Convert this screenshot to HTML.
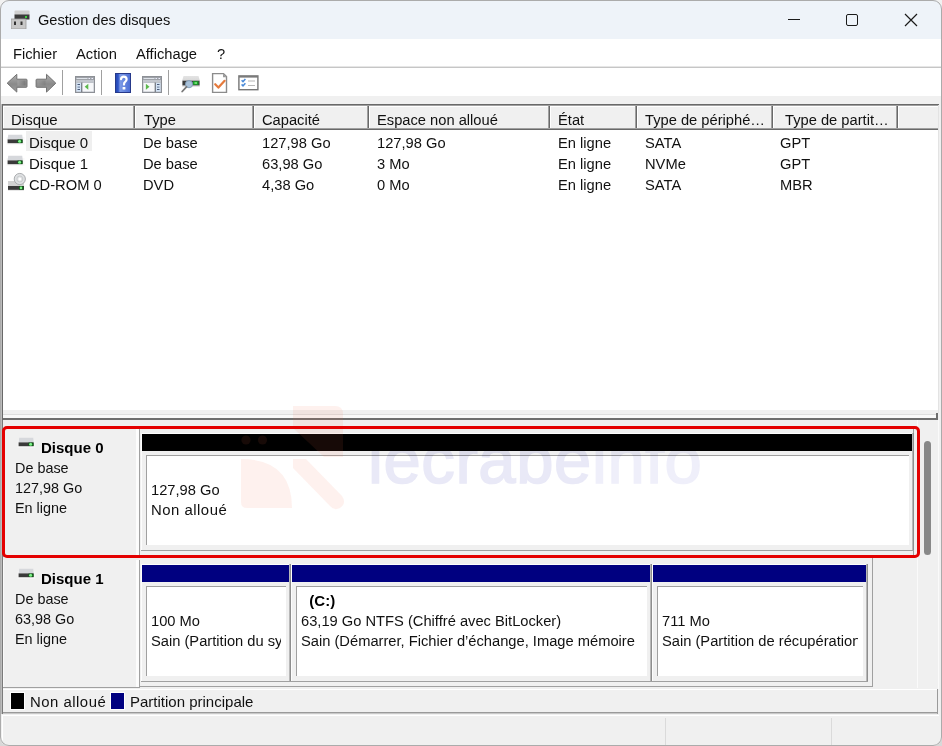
<!DOCTYPE html>
<html><head><meta charset="utf-8">
<style>
*{margin:0;padding:0;box-sizing:border-box}
html,body{width:942px;height:746px;overflow:hidden;background:linear-gradient(#f2f2f2,#d8d8d8)}
body{position:relative;font-family:"Liberation Sans",sans-serif;font-size:14.5px;color:#000}
.a{position:absolute}
.t{position:absolute;line-height:20px;white-space:nowrap;font-size:14.7px;color:#111}
.b{font-weight:bold;color:#000;font-size:15px}
.d{font-size:15px}
#win{position:absolute;left:0;top:0;width:942px;height:746px;border-radius:9px;overflow:hidden;background:#f0f0f0}
#frame{position:absolute;left:0;top:0;width:942px;height:746px;border:1px solid #ababab;border-radius:9px;pointer-events:none}
</style></head><body>
<div id="win">
<div class="a" style="left:0px;top:0px;width:942px;height:39px;background:#eef3f9;"></div>
<div class="a" style="left:0px;top:39px;width:942px;height:27px;background:#fff;"></div>
<div class="a" style="left:0px;top:66px;width:942px;height:1px;background:#e6e6e6;"></div>
<div class="a" style="left:0px;top:67px;width:942px;height:1px;background:#c6c6c6;"></div>
<div class="a" style="left:0px;top:68px;width:942px;height:28px;background:#fff;"></div>
<div class="a" style="left:0px;top:96px;width:942px;height:8px;background:#f0f0f0;"></div>
<svg class="a" style="left:11px;top:10px" width="20" height="19" viewBox="0 0 20 19">
<rect x="3.5" y="0.5" width="15" height="5" rx="1" fill="#cfcfcf"/>
<rect x="3.5" y="4.5" width="15" height="5" fill="#3b3b3b"/>
<rect x="14" y="6" width="2" height="2" fill="#3ad13a"/>
<rect x="0" y="9" width="15" height="10" fill="#c8c8c8" stroke="#9a9a9a" stroke-width="0.8"/>
<rect x="3" y="11.5" width="2" height="3.5" fill="#333"/>
<rect x="9.5" y="11.5" width="2" height="3.5" fill="#333"/>
</svg>
<div class="t" style="left:38px;top:9.600000000000001px;font-size:14.6px;">Gestion des disques</div>
<div class="a" style="left:788px;top:19px;width:12px;height:1px;background:#1a1a1a;"></div>
<div class="a" style="left:846px;top:14px;width:12px;height:12px;border:1.2px solid #1a1a1a;border-radius:2px"></div>
<svg class="a" style="left:904px;top:13px" width="14" height="14" viewBox="0 0 14 14"><path d="M1 1L13 13M13 1L1 13" stroke="#1a1a1a" stroke-width="1.2"/></svg>
<div class="t" style="left:13px;top:43.6px;">Fichier</div>
<div class="t" style="left:76px;top:43.6px;">Action</div>
<div class="t" style="left:136px;top:43.6px;">Affichage</div>
<div class="t" style="left:217px;top:43.6px;">?</div>
<div class="a" style="left:62px;top:70px;width:1px;height:25px;background:#a0a0a0;"></div>
<div class="a" style="left:101px;top:70px;width:1px;height:25px;background:#a0a0a0;"></div>
<div class="a" style="left:168px;top:70px;width:1px;height:25px;background:#a0a0a0;"></div>
<svg class="a" style="left:0px;top:70px" width="60" height="26" viewBox="0 0 60 26">
<defs>
<linearGradient id="ag" x1="0" y1="0" x2="0" y2="1"><stop offset="0" stop-color="#b0b0b0"/><stop offset="0.55" stop-color="#8a8a8a"/><stop offset="1" stop-color="#9c9c9c"/></linearGradient>
<linearGradient id="ag2" x1="0" y1="0" x2="1" y2="0"><stop offset="0" stop-color="#aaa"/><stop offset="1" stop-color="#6c6c6c"/></linearGradient>
</defs>
<path d="M7.2 13.2L16.8 4.3V9.2H26.2Q27 9.2 27 10V16.5Q27 17.3 26.2 17.3H16.8V22.1Z" fill="url(#ag)" stroke="#727272" stroke-width="1" stroke-linejoin="round"/>
<path d="M17.5 10.5H25.5V15.5H17.5Z" fill="url(#ag2)" opacity="0.6"/>
<path d="M55.8 13.2L46.5 4.3V9.2H36.9Q36.1 9.2 36.1 10V16.5Q36.1 17.3 36.9 17.3H46.5V22.1Z" fill="url(#ag)" stroke="#727272" stroke-width="1" stroke-linejoin="round"/>
<path d="M37.5 10.5H45.5V15.5H37.5Z" fill="url(#ag2)" opacity="0.35"/>
</svg>
<svg class="a" style="left:75px;top:76px" width="20" height="17" viewBox="0 0 20 17"><rect x="0.5" y="0.5" width="19" height="16" fill="#b9bdc4" stroke="#8d9096"/><rect x="1" y="1" width="18" height="3" fill="#9ea2a8"/><rect x="1.5" y="2" width="11" height="1" fill="#dfe3ea"/><rect x="13.5" y="2" width="1.5" height="1" fill="#eef"/><rect x="16.5" y="2" width="1.5" height="1" fill="#eef"/><rect x="1" y="4" width="18" height="2.5" fill="#c3c7ce"/><rect x="1.5" y="7" width="4.5" height="8.5" fill="#d3e3f5"/><rect x="2.5" y="8" width="2.5" height="1" fill="#4a5a78"/><rect x="2.5" y="10.5" width="2.5" height="1.2" fill="#7a8aa8"/><rect x="2.5" y="13" width="2.5" height="1" fill="#4a5a78"/><rect x="6.2" y="6.5" width="1.2" height="9.5" fill="#6e737c"/><rect x="7.5" y="7" width="11" height="8.5" fill="#f6f7f9"/><path d="M9.7 10.8L13.3 7.8V13.8Z" fill="#5cb84c"/></svg>
<svg class="a" style="left:142px;top:76px" width="20" height="17" viewBox="0 0 20 17"><rect x="0.5" y="0.5" width="19" height="16" fill="#b9bdc4" stroke="#8d9096"/><rect x="1" y="1" width="18" height="3" fill="#9ea2a8"/><rect x="1.5" y="2" width="11" height="1" fill="#dfe3ea"/><rect x="13.5" y="2" width="1.5" height="1" fill="#eef"/><rect x="16.5" y="2" width="1.5" height="1" fill="#eef"/><rect x="1" y="4" width="18" height="2.5" fill="#c3c7ce"/><rect x="14" y="7" width="4.5" height="8.5" fill="#d3e3f5"/><rect x="15" y="8" width="2.5" height="1" fill="#4a5a78"/><rect x="15" y="10.5" width="2.5" height="1.2" fill="#7a8aa8"/><rect x="15" y="13" width="2.5" height="1" fill="#4a5a78"/><rect x="12.6" y="6.5" width="1.2" height="9.5" fill="#6e737c"/><rect x="1.5" y="7" width="11" height="8.5" fill="#f6f7f9"/><path d="M7.5 10.8L3.9 7.8V13.8Z" fill="#5cb84c"/></svg>
<svg class="a" style="left:115px;top:73px" width="16" height="20" viewBox="0 0 16 20">
<defs><linearGradient id="hg" x1="0" y1="0" x2="1" y2="0"><stop offset="0" stop-color="#2448b0"/><stop offset="0.18" stop-color="#2f55c8"/><stop offset="0.3" stop-color="#7d9be6"/><stop offset="1" stop-color="#4a6cd4"/></linearGradient></defs>
<rect x="0.5" y="0.5" width="15" height="19" fill="url(#hg)" stroke="#26398a"/>
<path d="M6 6.2Q6.3 3.6 8.8 3.6Q11.6 3.6 11.6 6.3Q11.6 8 9.9 9.2Q9 9.9 9 11.6" stroke="#fff" stroke-width="2.2" fill="none" stroke-linecap="round"/>
<rect x="7.6" y="14" width="2.8" height="2.6" rx="0.6" fill="#fff"/>
</svg>
<svg class="a" style="left:181px;top:75px" width="20" height="18" viewBox="0 0 20 18">
<defs><linearGradient id="rg" x1="0" y1="0" x2="0" y2="1"><stop offset="0" stop-color="#e4e4e4"/><stop offset="1" stop-color="#c8c8c8"/></linearGradient></defs>
<path d="M2.5 1H17.5L18.8 5.5V11.5H1.2V5.5Z" fill="url(#rg)"/>
<rect x="1.5" y="5.7" width="17" height="4.6" fill="#3c3c3c"/>
<rect x="12" y="6.2" width="5.5" height="3.6" fill="#1aa02a"/>
<rect x="13.5" y="7.2" width="2.5" height="1.6" fill="#7ef07e"/>
<circle cx="8" cy="9.2" r="3.6" fill="#a9c2da" stroke="#7f9ab4" stroke-width="0.9"/>
<path d="M5.5 11.8L1.2 16.5" stroke="#7a7a7a" stroke-width="1.8" stroke-linecap="round"/>
</svg>
<svg class="a" style="left:211px;top:72px" width="17" height="22" viewBox="0 0 17 22">
<path d="M1.6 1.6H12.5L15.5 4.6V20.4H1.6Z" fill="#fff" stroke="#8c8c8c" stroke-width="1.4"/>
<path d="M12 1.6V5.2H15.6Z" fill="#9a9a9a"/>
<path d="M4.2 12.2L7.4 15.6L13.6 8.8" stroke="#e57a3c" stroke-width="2.2" fill="none" stroke-linecap="round" stroke-linejoin="round"/>
</svg>
<svg class="a" style="left:238px;top:75px" width="21" height="16" viewBox="0 0 21 16">
<rect x="0.9" y="0.9" width="19" height="13.8" fill="#fff" stroke="#767676" stroke-width="1.4"/>
<rect x="1" y="1" width="19" height="1.6" fill="#7a7a7a"/>
<path d="M3.6 5.2L5 6.6L7.4 4M3.6 9.4L5 10.8L7.4 8.2" stroke="#4a8ad8" stroke-width="1.5" fill="none"/>
<rect x="10" y="5.5" width="7" height="1" fill="#b8b8b8"/><rect x="10" y="10" width="7" height="1" fill="#b8b8b8"/>
</svg>
<div class="a" style="left:2px;top:104px;width:937px;height:1px;background:#696969;"></div>
<div class="a" style="left:2px;top:104px;width:1px;height:316px;background:#696969;"></div>
<div class="a" style="left:3px;top:105px;width:935px;height:305px;background:#fff;"></div>
<div class="a" style="left:3px;top:105px;width:935px;height:1px;background:#a0a0a0;"></div>
<div class="a" style="left:938px;top:105px;width:1px;height:308px;background:#e3e3e3;"></div>
<div class="a" style="left:3px;top:106px;width:132px;height:24px;background:#f0f0f0;"></div>
<div class="a" style="left:3px;top:106px;width:1px;height:22px;background:#fff;"></div>
<div class="a" style="left:3px;top:106px;width:131px;height:1px;background:#fff;"></div>
<div class="a" style="left:133px;top:106px;width:1px;height:23px;background:#a0a0a0;"></div>
<div class="a" style="left:134px;top:106px;width:1px;height:24px;background:#696969;"></div>
<div class="a" style="left:135px;top:106px;width:119px;height:24px;background:#f0f0f0;"></div>
<div class="a" style="left:135px;top:106px;width:1px;height:22px;background:#fff;"></div>
<div class="a" style="left:135px;top:106px;width:118px;height:1px;background:#fff;"></div>
<div class="a" style="left:252px;top:106px;width:1px;height:23px;background:#a0a0a0;"></div>
<div class="a" style="left:253px;top:106px;width:1px;height:24px;background:#696969;"></div>
<div class="a" style="left:254px;top:106px;width:115px;height:24px;background:#f0f0f0;"></div>
<div class="a" style="left:254px;top:106px;width:1px;height:22px;background:#fff;"></div>
<div class="a" style="left:254px;top:106px;width:114px;height:1px;background:#fff;"></div>
<div class="a" style="left:367px;top:106px;width:1px;height:23px;background:#a0a0a0;"></div>
<div class="a" style="left:368px;top:106px;width:1px;height:24px;background:#696969;"></div>
<div class="a" style="left:369px;top:106px;width:181px;height:24px;background:#f0f0f0;"></div>
<div class="a" style="left:369px;top:106px;width:1px;height:22px;background:#fff;"></div>
<div class="a" style="left:369px;top:106px;width:180px;height:1px;background:#fff;"></div>
<div class="a" style="left:548px;top:106px;width:1px;height:23px;background:#a0a0a0;"></div>
<div class="a" style="left:549px;top:106px;width:1px;height:24px;background:#696969;"></div>
<div class="a" style="left:550px;top:106px;width:87px;height:24px;background:#f0f0f0;"></div>
<div class="a" style="left:550px;top:106px;width:1px;height:22px;background:#fff;"></div>
<div class="a" style="left:550px;top:106px;width:86px;height:1px;background:#fff;"></div>
<div class="a" style="left:635px;top:106px;width:1px;height:23px;background:#a0a0a0;"></div>
<div class="a" style="left:636px;top:106px;width:1px;height:24px;background:#696969;"></div>
<div class="a" style="left:637px;top:106px;width:136px;height:24px;background:#f0f0f0;"></div>
<div class="a" style="left:637px;top:106px;width:1px;height:22px;background:#fff;"></div>
<div class="a" style="left:637px;top:106px;width:135px;height:1px;background:#fff;"></div>
<div class="a" style="left:771px;top:106px;width:1px;height:23px;background:#a0a0a0;"></div>
<div class="a" style="left:772px;top:106px;width:1px;height:24px;background:#696969;"></div>
<div class="a" style="left:773px;top:106px;width:125px;height:24px;background:#f0f0f0;"></div>
<div class="a" style="left:773px;top:106px;width:1px;height:22px;background:#fff;"></div>
<div class="a" style="left:773px;top:106px;width:124px;height:1px;background:#fff;"></div>
<div class="a" style="left:896px;top:106px;width:1px;height:23px;background:#a0a0a0;"></div>
<div class="a" style="left:897px;top:106px;width:1px;height:24px;background:#696969;"></div>
<div class="a" style="left:898px;top:106px;width:40px;height:24px;background:#f0f0f0;"></div>
<div class="a" style="left:898px;top:106px;width:1px;height:22px;background:#fff;"></div>
<div class="a" style="left:898px;top:106px;width:40px;height:1px;background:#fff;"></div>
<div class="a" style="left:3px;top:128px;width:935px;height:1px;background:#a0a0a0;"></div>
<div class="a" style="left:3px;top:129px;width:935px;height:1px;background:#696969;"></div>
<div class="t" style="left:11px;top:110px;font-size:15px;">Disque</div>
<div class="t" style="left:144px;top:110px;">Type</div>
<div class="t" style="left:262px;top:110px;">Capacité</div>
<div class="t" style="left:377px;top:110px;">Espace non alloué</div>
<div class="t" style="left:558px;top:110px;">État</div>
<div class="t" style="left:645px;top:110px;">Type de périphé…</div>
<div class="t" style="left:785px;top:110px;">Type de partit…</div>
<div class="a" style="left:26px;top:131px;width:66px;height:20px;background:#efefef;"></div>
<svg class="a" style="left:6px;top:134px" width="19" height="11" viewBox="0 0 19 11">
<rect x="0.5" y="3" width="18" height="8" fill="#f6f6f6" fill-opacity="0.7"/>
<path d="M2.2 0.8H16.2L16.8 5.4H1.6Z" fill="#d6d8dc"/>
<rect x="1.6" y="5.4" width="15" height="3.8" fill="#3a3a3a"/>
<rect x="11.5" y="5.6" width="5" height="3.4" fill="#0e5a14"/>
<circle cx="13.6" cy="7.3" r="1.5" fill="#7ef28a"/>
</svg>
<svg class="a" style="left:6px;top:155px" width="19" height="11" viewBox="0 0 19 11">
<rect x="0.5" y="3" width="18" height="8" fill="#f6f6f6" fill-opacity="0.7"/>
<path d="M2.2 0.8H16.2L16.8 5.4H1.6Z" fill="#d6d8dc"/>
<rect x="1.6" y="5.4" width="15" height="3.8" fill="#3a3a3a"/>
<rect x="11.5" y="5.6" width="5" height="3.4" fill="#0e5a14"/>
<circle cx="13.6" cy="7.3" r="1.5" fill="#7ef28a"/>
</svg>
<svg class="a" style="left:7px;top:172px" width="19" height="19" viewBox="0 0 19 19">
<rect x="1" y="9" width="16" height="9.5" fill="#d2d2d2"/>
<rect x="1" y="14" width="16" height="3.8" fill="#3a3a3a"/>
<rect x="12" y="14.2" width="4.5" height="3.4" fill="#0e5a14"/>
<circle cx="14" cy="15.9" r="1.3" fill="#7ef28a"/>
<circle cx="12.8" cy="7" r="5.6" fill="#dfe1e3" stroke="#a4a6a8" stroke-width="0.9"/>
<circle cx="12.8" cy="7" r="3" fill="none" stroke="#c4c6c8" stroke-width="0.8"/>
<circle cx="12.8" cy="7" r="1.5" fill="#fff"/>
</svg>
<div class="t" style="left:29px;top:132.6px;font-size:15px;">Disque 0</div>
<div class="t" style="left:143px;top:132.6px;">De base</div>
<div class="t" style="left:262px;top:132.6px;">127,98 Go</div>
<div class="t" style="left:377px;top:132.6px;">127,98 Go</div>
<div class="t" style="left:558px;top:132.6px;">En ligne</div>
<div class="t" style="left:645px;top:132.6px;">SATA</div>
<div class="t" style="left:780px;top:132.6px;">GPT</div>
<div class="t" style="left:29px;top:153.6px;font-size:15px;">Disque 1</div>
<div class="t" style="left:143px;top:153.6px;">De base</div>
<div class="t" style="left:262px;top:153.6px;">63,98 Go</div>
<div class="t" style="left:377px;top:153.6px;">3 Mo</div>
<div class="t" style="left:558px;top:153.6px;">En ligne</div>
<div class="t" style="left:645px;top:153.6px;">NVMe</div>
<div class="t" style="left:780px;top:153.6px;">GPT</div>
<div class="t" style="left:29px;top:174.6px;">CD-ROM 0</div>
<div class="t" style="left:143px;top:174.6px;">DVD</div>
<div class="t" style="left:262px;top:174.6px;">4,38 Go</div>
<div class="t" style="left:377px;top:174.6px;">0 Mo</div>
<div class="t" style="left:558px;top:174.6px;">En ligne</div>
<div class="t" style="left:645px;top:174.6px;">SATA</div>
<div class="t" style="left:780px;top:174.6px;">MBR</div>
<div class="a" style="left:3px;top:410px;width:935px;height:4px;background:#f0f0f0;"></div>
<div class="a" style="left:3px;top:414px;width:934px;height:1px;background:#dedede;"></div>
<div class="a" style="left:3px;top:415px;width:934px;height:3px;background:#f9f9f9;"></div>
<div class="a" style="left:3px;top:418px;width:935px;height:2px;background:#6e6e6e;"></div>
<div class="a" style="left:936px;top:413px;width:2px;height:6px;background:#6e6e6e;"></div>
<div class="a" style="left:3px;top:420px;width:935px;height:269px;background:#f0f0f0;"></div>
<div class="a" style="left:917px;top:420px;width:1px;height:268px;background:#fafafa;"></div>
<div class="a" style="left:938px;top:420px;width:1px;height:269px;background:#fafafa;"></div>
<div class="a" style="left:924px;top:441px;width:7px;height:114px;background:#888;border-radius:3.5px"></div>
<div class="a" style="left:3px;top:429px;width:133px;height:127px;background:#f0f0f0;"></div>
<div class="a" style="left:3px;top:429px;width:1px;height:127px;background:#fafafa;"></div>
<div class="a" style="left:136px;top:429px;width:3px;height:127px;background:#fcfcfc;"></div>
<div class="a" style="left:139px;top:429px;width:1px;height:127px;background:#a0a0a0;"></div>
<div class="a" style="left:3px;top:556px;width:137px;height:1px;background:#a0a0a0;"></div>
<svg class="a" style="left:17px;top:437px" width="19" height="11" viewBox="0 0 19 11">
<rect x="0.5" y="3" width="18" height="8" fill="#f6f6f6" fill-opacity="0.7"/>
<path d="M2.2 0.8H16.2L16.8 5.4H1.6Z" fill="#d6d8dc"/>
<rect x="1.6" y="5.4" width="15" height="3.8" fill="#3a3a3a"/>
<rect x="11.5" y="5.6" width="5" height="3.4" fill="#0e5a14"/>
<circle cx="13.6" cy="7.3" r="1.5" fill="#7ef28a"/>
</svg>
<div class="t b" style="left:41px;top:437.5px;">Disque 0</div>
<div class="t" style="left:15px;top:457.5px;font-size:14.4px;">De base</div>
<div class="t" style="left:15px;top:477.5px;font-size:14.4px;">127,98 Go</div>
<div class="t" style="left:15px;top:497.5px;font-size:14.4px;">En ligne</div>
<div class="a" style="left:913px;top:427px;width:1px;height:129px;background:#a0a0a0;"></div>
<div class="a" style="left:140px;top:555px;width:774px;height:1px;background:#a0a0a0;"></div>
<div class="a" style="left:141px;top:433px;width:771px;height:1px;background:#fdfdfd;"></div>
<div class="a" style="left:141px;top:433px;width:1px;height:117px;background:#fdfdfd;"></div>
<div class="a" style="left:142px;top:434px;width:770px;height:17px;background:#000;"></div>
<div class="a" style="left:912px;top:433px;width:1px;height:117px;background:#b8b8b8;"></div>
<div class="a" style="left:913px;top:433px;width:1px;height:117px;background:#8e8e8e;"></div>
<div class="a" style="left:141px;top:550px;width:773px;height:1px;background:#a0a0a0;"></div>
<div class="a" style="left:146px;top:455px;width:763px;height:90px;background:#fff;"></div>
<div class="a" style="left:146px;top:455px;width:763px;height:1px;background:#a0a0a0;"></div>
<div class="a" style="left:146px;top:455px;width:1px;height:90px;background:#a0a0a0;"></div>
<div class="a" style="left:151px;top:479.5px;width:753px;height:20px;overflow:hidden"><div class="t" style="left:0px;top:0">127,98 Go</div></div>
<div class="a" style="left:151px;top:499.5px;width:753px;height:20px;overflow:hidden"><div class="t" style="left:0px;top:0"><span style='font-size:14.9px;letter-spacing:0.5px'>Non alloué</span></div></div>
<div class="a" style="left:3px;top:560px;width:133px;height:127px;background:#f0f0f0;"></div>
<div class="a" style="left:3px;top:560px;width:1px;height:127px;background:#fafafa;"></div>
<div class="a" style="left:136px;top:560px;width:3px;height:127px;background:#fcfcfc;"></div>
<div class="a" style="left:139px;top:560px;width:1px;height:127px;background:#a0a0a0;"></div>
<div class="a" style="left:3px;top:687px;width:137px;height:1px;background:#a0a0a0;"></div>
<svg class="a" style="left:17px;top:568px" width="19" height="11" viewBox="0 0 19 11">
<rect x="0.5" y="3" width="18" height="8" fill="#f6f6f6" fill-opacity="0.7"/>
<path d="M2.2 0.8H16.2L16.8 5.4H1.6Z" fill="#d6d8dc"/>
<rect x="1.6" y="5.4" width="15" height="3.8" fill="#3a3a3a"/>
<rect x="11.5" y="5.6" width="5" height="3.4" fill="#0e5a14"/>
<circle cx="13.6" cy="7.3" r="1.5" fill="#7ef28a"/>
</svg>
<div class="t b" style="left:41px;top:568.5px;">Disque 1</div>
<div class="t" style="left:15px;top:588.5px;font-size:14.4px;">De base</div>
<div class="t" style="left:15px;top:608.5px;font-size:14.4px;">63,98 Go</div>
<div class="t" style="left:15px;top:628.5px;font-size:14.4px;">En ligne</div>
<div class="a" style="left:872px;top:558px;width:1px;height:129px;background:#a0a0a0;"></div>
<div class="a" style="left:140px;top:686px;width:733px;height:1px;background:#a0a0a0;"></div>
<div class="a" style="left:141px;top:564px;width:148px;height:1px;background:#fdfdfd;"></div>
<div class="a" style="left:141px;top:564px;width:1px;height:117px;background:#fdfdfd;"></div>
<div class="a" style="left:142px;top:565px;width:147px;height:17px;background:#000080;"></div>
<div class="a" style="left:289px;top:564px;width:1px;height:117px;background:#b8b8b8;"></div>
<div class="a" style="left:290px;top:564px;width:1px;height:117px;background:#8e8e8e;"></div>
<div class="a" style="left:141px;top:681px;width:150px;height:1px;background:#a0a0a0;"></div>
<div class="a" style="left:146px;top:586px;width:140px;height:90px;background:#fff;"></div>
<div class="a" style="left:146px;top:586px;width:140px;height:1px;background:#a0a0a0;"></div>
<div class="a" style="left:146px;top:586px;width:1px;height:90px;background:#a0a0a0;"></div>
<div class="a" style="left:151px;top:610.5px;width:130px;height:20px;overflow:hidden"><div class="t" style="left:0px;top:0">100 Mo</div></div>
<div class="a" style="left:151px;top:630.5px;width:130px;height:20px;overflow:hidden"><div class="t" style="left:0px;top:0">Sain (Partition du système EFI)</div></div>
<div class="a" style="left:291px;top:564px;width:359px;height:1px;background:#fdfdfd;"></div>
<div class="a" style="left:291px;top:564px;width:1px;height:117px;background:#fdfdfd;"></div>
<div class="a" style="left:292px;top:565px;width:358px;height:17px;background:#000080;"></div>
<div class="a" style="left:650px;top:564px;width:1px;height:117px;background:#b8b8b8;"></div>
<div class="a" style="left:651px;top:564px;width:1px;height:117px;background:#8e8e8e;"></div>
<div class="a" style="left:291px;top:681px;width:361px;height:1px;background:#a0a0a0;"></div>
<div class="a" style="left:296px;top:586px;width:351px;height:90px;background:#fff;"></div>
<div class="a" style="left:296px;top:586px;width:351px;height:1px;background:#a0a0a0;"></div>
<div class="a" style="left:296px;top:586px;width:1px;height:90px;background:#a0a0a0;"></div>
<div class="a" style="left:301px;top:590.5px;width:341px;height:20px;overflow:hidden"><div class="t b" style="left:0px;top:0">&nbsp;&nbsp;(C:)</div></div>
<div class="a" style="left:301px;top:610.5px;width:341px;height:20px;overflow:hidden"><div class="t" style="left:0px;top:0">63,19 Go NTFS (Chiffré avec BitLocker)</div></div>
<div class="a" style="left:301px;top:630.5px;width:341px;height:20px;overflow:hidden"><div class="t" style="left:0px;top:0">Sain (Démarrer, Fichier d’échange, Image mémoire</div></div>
<div class="a" style="left:652px;top:564px;width:214px;height:1px;background:#fdfdfd;"></div>
<div class="a" style="left:652px;top:564px;width:1px;height:117px;background:#fdfdfd;"></div>
<div class="a" style="left:653px;top:565px;width:213px;height:17px;background:#000080;"></div>
<div class="a" style="left:866px;top:564px;width:1px;height:117px;background:#b8b8b8;"></div>
<div class="a" style="left:867px;top:564px;width:1px;height:117px;background:#8e8e8e;"></div>
<div class="a" style="left:652px;top:681px;width:216px;height:1px;background:#a0a0a0;"></div>
<div class="a" style="left:657px;top:586px;width:206px;height:90px;background:#fff;"></div>
<div class="a" style="left:657px;top:586px;width:206px;height:1px;background:#a0a0a0;"></div>
<div class="a" style="left:657px;top:586px;width:1px;height:90px;background:#a0a0a0;"></div>
<div class="a" style="left:662px;top:610.5px;width:196px;height:20px;overflow:hidden"><div class="t" style="left:0px;top:0">711 Mo</div></div>
<div class="a" style="left:662px;top:630.5px;width:196px;height:20px;overflow:hidden"><div class="t" style="left:0px;top:0">Sain (Partition de récupération)</div></div>
<div class="a" style="left:1px;top:104px;width:1px;height:612px;background:#bcbcbc;"></div>
<div class="a" style="left:2px;top:420px;width:1px;height:294px;background:#7a7a7a;"></div>
<div class="a" style="left:3px;top:689px;width:935px;height:24px;background:#f0f0f0;"></div>
<div class="a" style="left:3px;top:689px;width:935px;height:1px;background:#fff;"></div>
<div class="a" style="left:3px;top:712px;width:935px;height:1px;background:#9a9a9a;"></div>
<div class="a" style="left:3px;top:713px;width:935px;height:1px;background:#c8c8c8;"></div>
<div class="a" style="left:937px;top:689px;width:1px;height:25px;background:#9a9a9a;"></div>
<div class="a" style="left:10px;top:692px;width:15px;height:18px;background:#fff;"></div>
<div class="a" style="left:11px;top:693px;width:13px;height:16px;background:#000;"></div>
<div class="a" style="left:110px;top:692px;width:15px;height:18px;background:#fff;"></div>
<div class="a" style="left:111px;top:693px;width:13px;height:16px;background:#000080;"></div>
<div class="t" style="left:30px;top:692.3px;font-size:14.9px;letter-spacing:0.5px;">Non alloué</div>
<div class="t" style="left:130px;top:692.3px;font-size:15px;">Partition principale</div>
<div class="a" style="left:0px;top:714px;width:942px;height:32px;background:#f0f0f0;"></div>
<div class="a" style="left:2px;top:715px;width:937px;height:1px;background:#fff;"></div>
<div class="a" style="left:2px;top:715px;width:1px;height:25px;background:#fff;"></div>
<div class="a" style="left:665px;top:718px;width:1px;height:27px;background:#dadada;"></div>
<div class="a" style="left:831px;top:718px;width:1px;height:27px;background:#dadada;"></div>
<svg class="a" style="left:0;top:0" width="942" height="746" viewBox="0 0 942 746">
<g fill="rgb(240,110,70)" fill-opacity="0.095">
<path d="M293 406H335Q343 406 343 414V457H324L293 428Z"/>
<path d="M293 459H306L342 496Q347 503 340 508Q334 511 330 506L293 468Z"/>
<path d="M241 459Q292 459 292 508H247Q241 508 241 502Z"/>
<circle cx="246" cy="440" r="4.6"/><circle cx="262.5" cy="440" r="4.6"/>
</g>
</svg>
<div class="a" style="left:368px;top:426px;font-family:&quot;Liberation Sans&quot;,sans-serif;font-weight:normal;font-size:67px;line-height:67px;letter-spacing:0.6px;white-space:nowrap;color:#e9e9f7;-webkit-text-stroke:1.6px #e9e9f7;mix-blend-mode:multiply">lecrabe<span style="color:#efeffa;-webkit-text-stroke:1.6px #efeffa">info</span></div>
<div class="a" style="left:2px;top:426px;width:918px;height:132px;border:3px solid #e40000;border-radius:5px"></div>
</div>
<div id="frame"></div>
</body></html>
